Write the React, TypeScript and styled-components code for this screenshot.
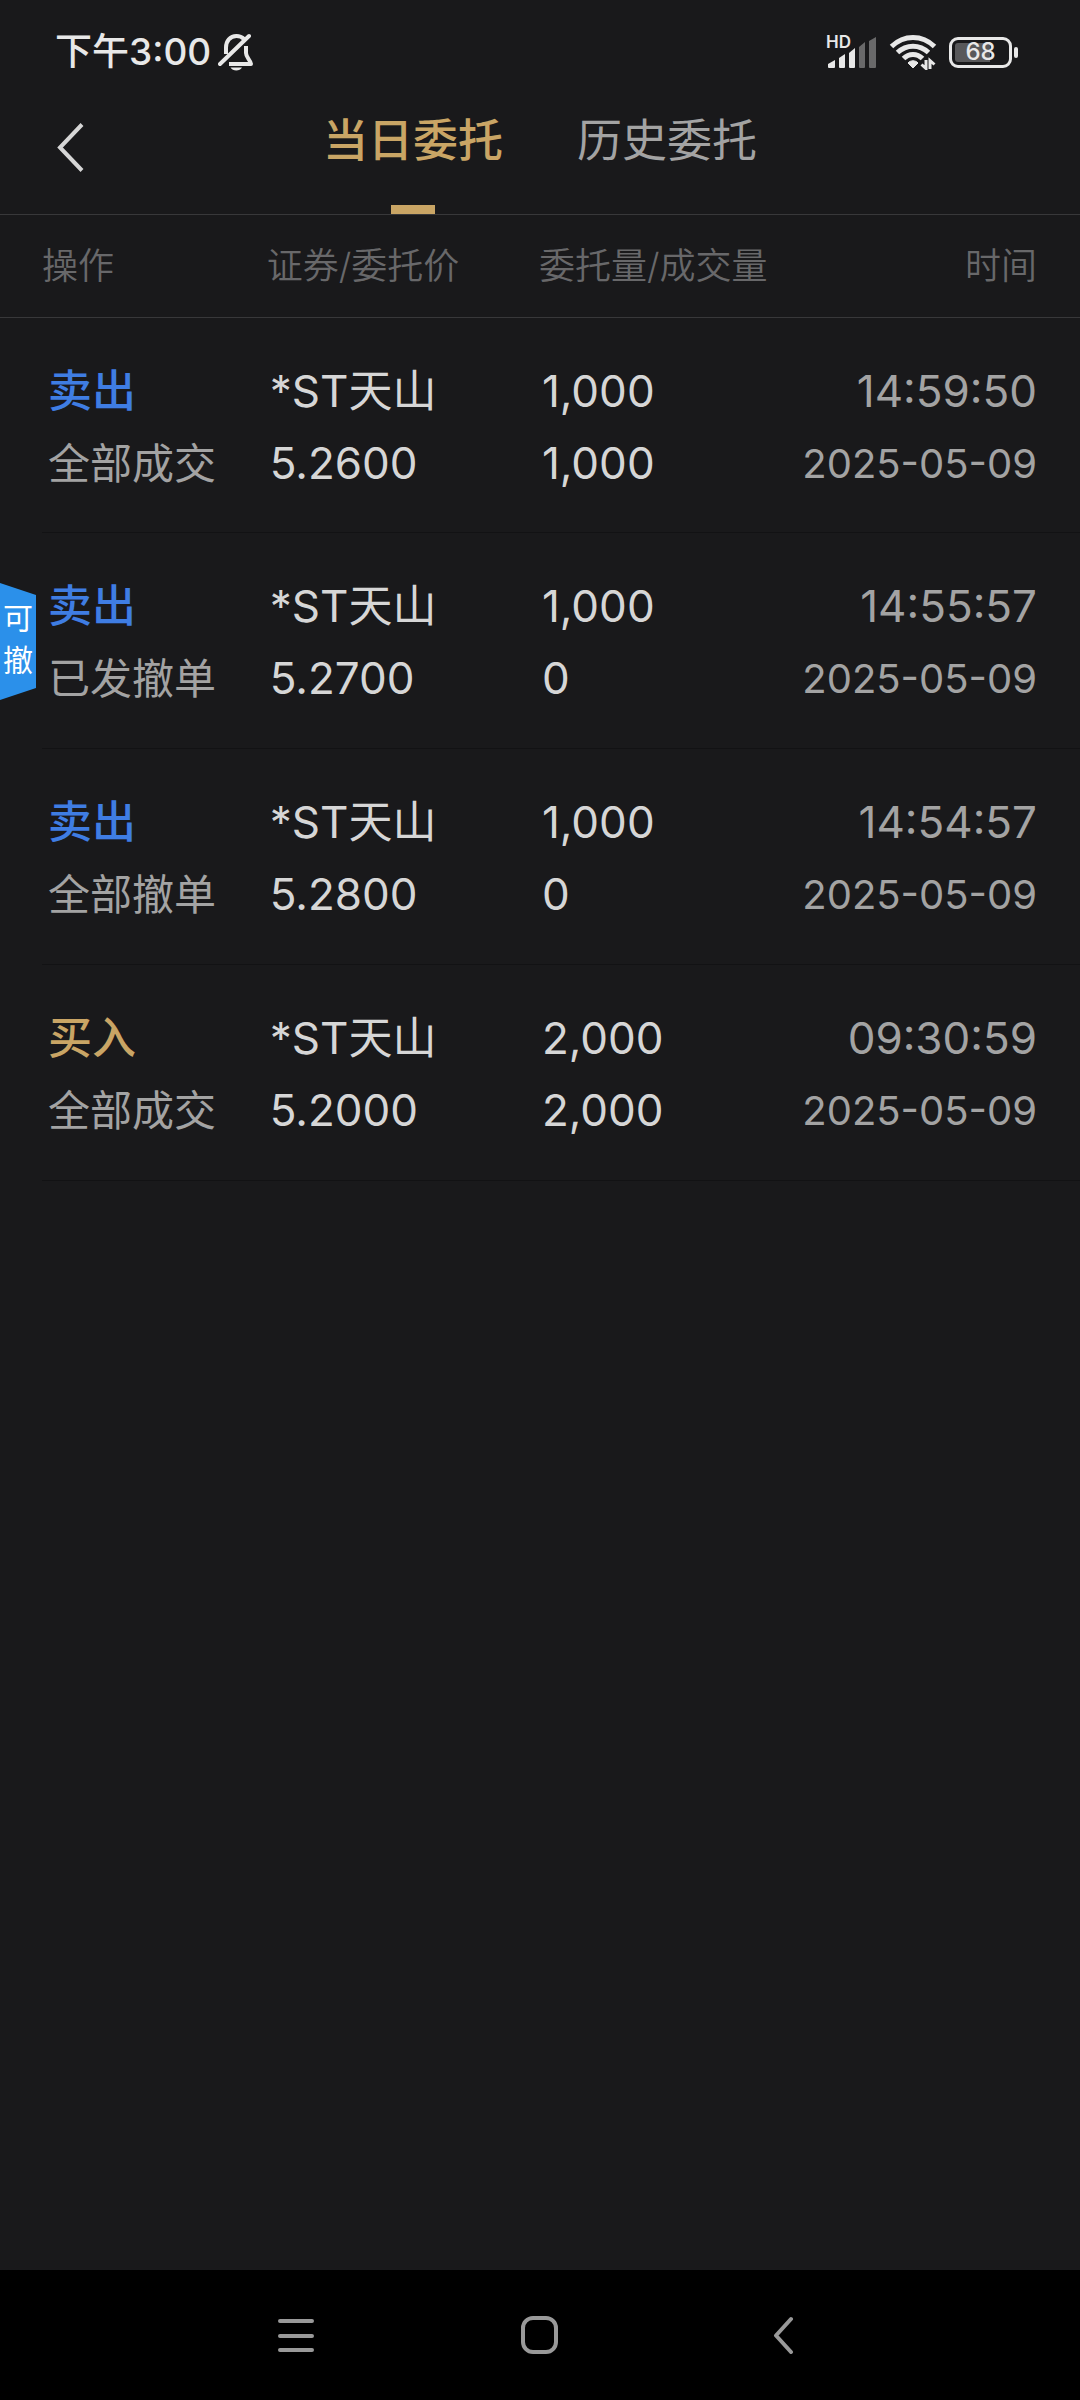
import React, { useState } from "react";
import styled, { createGlobalStyle } from "styled-components";

const color = {
  page: "#19191b",
  line: "#38383a",
  rowLine: "#121214",
  gold: "#c9a565",
  blue: "#3f7de3",
  badge: "#2b90ea",
  bright: "#d6d6d6",
  soft: "#a3a3a3",
  dim: "#68686a",
  status: "#e8e8e8",
};

const GlobalStyle = createGlobalStyle`
  * { box-sizing: border-box; }
  body {
    margin: 0;
    background: ${color.page};
    font-family: Inter, "Noto Sans CJK SC", sans-serif;
  }
  button {
    margin: 0;
    padding: 0;
    border: 0;
    background: none;
    font: inherit;
    color: inherit;
    cursor: pointer;
  }
  svg { display: block; }
`;

const Screen = styled.div`
  min-height: 100vh;
  display: flex;
  flex-direction: column;
  background: ${color.page};
`;

const StatusBar = styled.header`
  display: flex;
  align-items: center;
  justify-content: space-between;
  height: 104px;
  padding: 0 62px 0 55px;
  color: ${color.status};
`;

const Clock = styled.div`
  display: flex;
  align-items: center;
  gap: 7px;
  font-size: 37px;
  line-height: 48px;
  font-weight: 500;
`;

const Indicators = styled.div`
  display: flex;
  align-items: center;
  gap: 12px;
`;

const Battery = styled.div`
  display: flex;
  align-items: center;
  gap: 2px;
`;

const BatteryCase = styled.div`
  display: flex;
  width: 63px;
  height: 31px;
  padding: 3px;
  border: 3px solid ${color.status};
  border-radius: 9px;
`;

const BatteryLevel = styled.div`
  flex: 1;
  display: flex;
  align-items: center;
  justify-content: center;
  border-radius: 3px;
  background: linear-gradient(to right, #58585a 68%, transparent 68%);
  font-size: 24px;
  line-height: 20px;
  font-weight: 500;
`;

const BatteryTip = styled.div`
  width: 4px;
  height: 11px;
  border-radius: 2px;
  background: ${color.status};
`;

const TitleBar = styled.div`
  display: grid;
  grid-template-columns: 1fr auto 1fr;
  height: 111px;
  border-bottom: 1px solid ${color.line};
`;

const BackButton = styled.button`
  display: flex;
  align-items: center;
  justify-self: start;
  height: 86px;
  padding: 0 40px 0 56px;
`;

const Tabs = styled.nav`
  display: flex;
  gap: 74px;
`;

const Tab = styled.button<{ $active: boolean }>`
  display: flex;
  flex-direction: column;
  align-items: center;
  justify-content: space-between;
  font-size: 45px;
  line-height: 74px;
  font-weight: ${(p) => (p.$active ? 500 : 400)};
  color: ${(p) => (p.$active ? color.gold : color.soft)};

  &::after {
    content: "";
    width: 44px;
    height: 9px;
    background: ${(p) => (p.$active ? color.gold : "transparent")};
  }
`;

const Main = styled.main`
  flex: 1;
`;

const Table = styled.table`
  width: 100%;
  border-collapse: collapse;
  table-layout: fixed;
`;

const Column = styled.col<{ $width: string }>`
  width: ${(p) => p.$width};
`;

const HeadRow = styled.tr`
  height: 102px;
  border-bottom: 1px solid ${color.line};
`;

const HeadCell = styled.th<{ $end?: boolean }>`
  padding: 0 ${(p) => (p.$end ? 43 : 0)}px 0 0;
  text-align: ${(p) => (p.$end ? "right" : "left")};
  font-size: 36px;
  line-height: 48px;
  font-weight: 350;
  color: ${color.dim};
  white-space: nowrap;

  &:first-child { padding-left: 42px; }
`;

const OrderRow = styled.tr`
  height: 216px;
  background: linear-gradient(${color.rowLine}, ${color.rowLine}) right bottom /
    calc(100% - 42px) 1px no-repeat;
`;

const Cell = styled.td<{ $end?: boolean }>`
  position: relative;
  padding: 37px ${(p) => (p.$end ? 43 : 0)}px 0 3px;
  vertical-align: top;
  text-align: ${(p) => (p.$end ? "right" : "left")};
  white-space: nowrap;

  &:first-child { padding-left: 48px; }
`;

const textSize = { large: 44, medium: 42, small: 40 };

const Line = styled.div<{
  $tone: string;
  $size?: keyof typeof textSize;
  $strong?: boolean;
}>`
  font-size: ${(p) => textSize[p.$size ?? "large"]}px;
  line-height: ${(p) => (p.$size ? 74 : 72)}px;
  font-weight: ${(p) => (p.$strong ? 500 : 400)};
  color: ${(p) => p.$tone};
`;

const CancelBadge = styled.button`
  position: absolute;
  left: 0;
  top: 50px;
  width: 36px;
  height: 117px;
  padding: 0 3px 6px;
  clip-path: polygon(0 0, 100% 12px, 100% 105px, 0 100%);
  background: ${color.badge};
  color: #fff;
  font-size: 30px;
  line-height: 42px;
  white-space: normal;
`;

const SystemNav = styled.nav`
  display: flex;
  align-items: center;
  justify-content: center;
  gap: 172px;
  height: 130px;
  background: #000;
`;

const NavButton = styled.button`
  display: flex;
  align-items: center;
  justify-content: center;
  width: 72px;
  height: 72px;
`;

function MutedBell() {
  return (
    <svg width="36" height="38" viewBox="0 0 36 38" fill="none" aria-label="静音">
      <path d="M8 21V14.500C8 8 12 3 18.500 3C21.500 3 24 4 26 6" stroke={color.status} strokeWidth="4" />
      <path d="M2 31L31 3" stroke={color.status} strokeWidth="4" strokeLinecap="round" />
      <path d="M28 13V20C28 24.500 32.500 27 33 31H11" stroke={color.status} strokeWidth="4" strokeLinejoin="round" />
      <path d="M12.500 34.500H24C22 38.500 14.500 38.500 12.500 34.500Z" fill={color.status} />
    </svg>
  );
}

const SignalBox = styled.div`
  display: grid;
  width: 51px;
  height: 34px;
`;

const SignalLabel = styled.span`
  grid-area: 1 / 1;
  font-size: 17px;
  line-height: 14px;
  font-weight: 600;
`;

const SignalBars = styled.svg`
  grid-area: 1 / 1;
`;

function Signal() {
  return (
    <SignalBox>
      <SignalLabel>HD</SignalLabel>
      <SignalBars width="51" height="34" viewBox="0 0 51 34" aria-hidden="true">
        <g fill={color.status}>
          <path d="M2 29L9 25V32Q9 33 8 33H3Q2 33 2 32Z" />
          <path d="M13 23L19 19V32Q19 33 18 33H14Q13 33 13 32Z" />
          <path d="M23 18L29 13V32Q29 33 28 33H24Q23 33 23 32Z" />
        </g>
        <g fill="#69696a">
          <path d="M33 12L39 7V32Q39 33 38 33H34Q33 33 33 32Z" />
          <path d="M43 6L50 2V32Q50 33 49 33H44Q43 33 43 32Z" />
        </g>
      </SignalBars>
    </SignalBox>
  );
}

function Wifi() {
  return (
    <svg width="48" height="36" viewBox="0 0 48 36" fill="none" aria-label="无线网络">
      <g stroke={color.status} strokeWidth="5">
        <path d="M2.500 12.500C15 .5 33 .5 45.500 12.500" />
        <path d="M8.500 18.500C17.500 10 30.500 10 39.500 18.500" />
        <path d="M14.500 24.500C20 19 28 19 33.500 24.500" />
      </g>
      <path d="M19 29C21.500 26 26.500 26 29 29L24 34Z" fill={color.status} stroke={color.status} strokeLinejoin="round" />
      <path d="M37 26V34.500L32.500 30.500M41 35V26.500L45.500 30.500" stroke={color.status} strokeWidth="3" />
    </svg>
  );
}

function BackArrow() {
  return (
    <svg width="30" height="50" viewBox="0 0 30 50" fill="none" aria-hidden="true">
      <path d="M26 2.500L4 25.500L26 48.500" stroke={color.bright} strokeWidth="4" />
    </svg>
  );
}

type Order = {
  side: "卖出" | "买入";
  state: string;
  name: string;
  price: string;
  amount: string;
  filled: string;
  time: string;
  date: string;
  cancelable?: boolean;
};

const orders: Order[] = [
  { side: "卖出", state: "全部成交", name: "*ST天山", price: "5.2600", amount: "1,000", filled: "1,000", time: "14:59:50", date: "2025-05-09" },
  { side: "卖出", state: "已发撤单", name: "*ST天山", price: "5.2700", amount: "1,000", filled: "0", time: "14:55:57", date: "2025-05-09", cancelable: true },
  { side: "卖出", state: "全部撤单", name: "*ST天山", price: "5.2800", amount: "1,000", filled: "0", time: "14:54:57", date: "2025-05-09" },
  { side: "买入", state: "全部成交", name: "*ST天山", price: "5.2000", amount: "2,000", filled: "2,000", time: "09:30:59", date: "2025-05-09" },
];

const tabs = ["当日委托", "历史委托"];

export default function App() {
  const [active, setActive] = useState(0);

  return (
    <Screen lang="zh-CN">
      <GlobalStyle />
      <StatusBar>
        <Clock>
          <span>下午3:00</span>
          <MutedBell />
        </Clock>
        <Indicators>
          <Signal />
          <Wifi />
          <Battery>
            <BatteryCase>
              <BatteryLevel>68</BatteryLevel>
            </BatteryCase>
            <BatteryTip />
          </Battery>
        </Indicators>
      </StatusBar>

      <TitleBar>
        <BackButton aria-label="返回">
          <BackArrow />
        </BackButton>
        <Tabs>
          {tabs.map((label, i) => (
            <Tab key={label} $active={i === active} onClick={() => setActive(i)}>
              {label}
            </Tab>
          ))}
        </Tabs>
      </TitleBar>

      <Main>
        <Table>
          <colgroup>
            <Column $width="24.7%" />
            <Column $width="25.2%" />
            <Column $width="22.1%" />
            <Column $width="28%" />
          </colgroup>
          <thead>
            <HeadRow>
              <HeadCell scope="col">操作</HeadCell>
              <HeadCell scope="col">证券/委托价</HeadCell>
              <HeadCell scope="col">委托量/成交量</HeadCell>
              <HeadCell scope="col" $end>时间</HeadCell>
            </HeadRow>
          </thead>
          <tbody>
            {orders.map((o) => (
              <OrderRow key={o.time}>
                <Cell>
                  {o.cancelable && <CancelBadge>可撤</CancelBadge>}
                  <Line $strong $tone={o.side === "买入" ? color.gold : color.blue}>{o.side}</Line>
                  <Line $size="medium" $tone={color.soft}>{o.state}</Line>
                </Cell>
                <Cell>
                  <Line $tone={color.bright}>{o.name}</Line>
                  <Line $tone={color.bright}>{o.price}</Line>
                </Cell>
                <Cell>
                  <Line $tone={color.bright}>{o.amount}</Line>
                  <Line $tone={color.bright}>{o.filled}</Line>
                </Cell>
                <Cell $end>
                  <Line $tone={color.soft}>{o.time}</Line>
                  <Line $size="small" $tone={color.soft}>{o.date}</Line>
                </Cell>
              </OrderRow>
            ))}
          </tbody>
        </Table>
      </Main>

      <SystemNav aria-label="系统导航">
        <NavButton aria-label="最近任务">
          <svg width="38" height="38" viewBox="0 0 38 38" stroke="#999" strokeWidth="4" strokeLinecap="round">
            <path d="M3 5H35M3 20H35M3 34H35" />
          </svg>
        </NavButton>
        <NavButton aria-label="主屏幕">
          <svg width="38" height="40" viewBox="0 0 38 40" fill="none">
            <rect x="2" y="3" width="33" height="34" rx="10" stroke="#999" strokeWidth="4" />
          </svg>
        </NavButton>
        <NavButton aria-label="返回上一级">
          <svg width="22" height="38" viewBox="0 0 22 38" fill="none">
            <path d="M18 3L3 19.500L18 36" stroke="#999" strokeWidth="4" strokeLinecap="round" strokeLinejoin="round" />
          </svg>
        </NavButton>
      </SystemNav>
    </Screen>
  );
}
